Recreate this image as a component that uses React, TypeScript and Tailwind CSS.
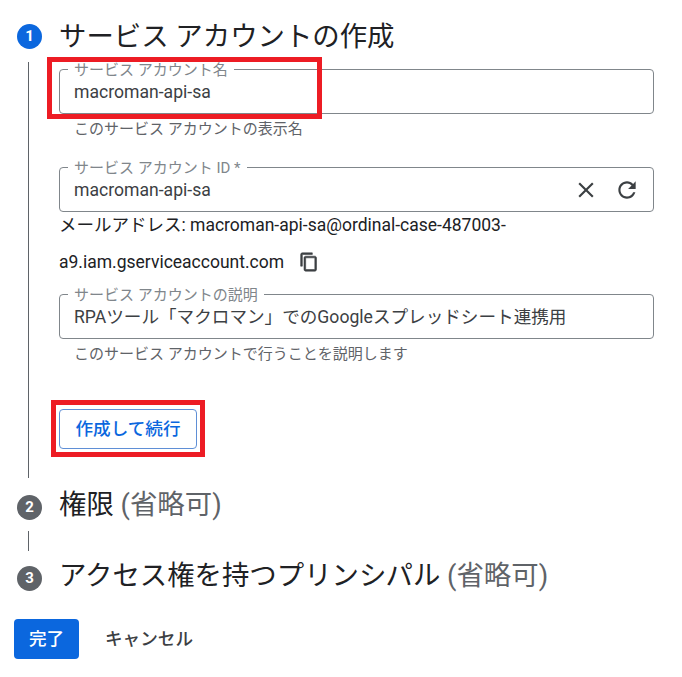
import React from 'react';

const font = "font-['Roboto','Noto_Sans_CJK_JP',sans-serif]";

const Icon: React.FC<{ d: string; className: string }> = ({ d, className }) => (
  <svg viewBox="0 0 24 24" fill="currentColor" className={className}>
    <path d={d} />
  </svg>
);

const closePath =
  'M19 6.41L17.59 5 12 10.59 6.41 5 5 6.41 10.59 12 5 17.59 6.41 19 12 13.41 17.59 19 19 17.59 13.41 12z';
const refreshPath =
  'M17.65 6.35C16.2 4.9 14.21 4 12 4c-4.42 0-7.99 3.58-7.99 8s3.57 8 7.99 8c3.73 0 6.84-2.55 7.73-6h-2.08c-.82 2.33-3.04 4-5.65 4-3.31 0-6-2.69-6-6s2.69-6 6-6c1.66 0 3.14.69 4.22 1.78L13 11h7V4l-2.35 2.35z';
const copyPath =
  'M16 1H4c-1.1 0-2 .9-2 2v14h2V3h12V1zm3 4H8c-1.1 0-2 .9-2 2v14c0 1.1.9 2 2 2h11c1.1 0 2-.9 2-2V7c0-1.1-.9-2-2-2zm0 16H8V7h11v14z';

const StepBadge: React.FC<{ n: number; active?: boolean }> = ({ n, active }) => (
  <div
    className={`flex h-[25px] w-[25px] shrink-0 items-center justify-center rounded-full text-[15px] font-bold text-white ${
      active ? 'bg-[#0b67de]' : 'bg-[#5f6368]'
    }`}
  >
    {n}
  </div>
);

const Field: React.FC<{ label: string; value: string; children?: React.ReactNode }> = ({ label, value, children }) => (
  <div className="relative flex h-[45px] items-center justify-between rounded-[4px] border border-[#80868b] pl-[14px] pr-[13px]">
    <span className="absolute -top-[8px] left-[8px] bg-white px-[6px] text-[15px] leading-[16px] text-[#80868b]">{label}</span>
    <span className="mt-[2px] text-[17.6px] text-[#3c4043]">{value}</span>
    {children}
  </div>
);

const Hint: React.FC<{ children: React.ReactNode }> = ({ children }) => (
  <p className="mt-[7px] pl-[15px] text-[15px] leading-[16px] text-[#5f6368]">{children}</p>
);

export default function App() {
  return (
    <div className={`${font} relative h-[677px] w-[682px] overflow-hidden bg-white pt-[20px] text-[#202124]`}>
      <div className="flex h-[32px] items-center pl-[17px]">
        <StepBadge n={1} active />
        <h2 className="ml-[17px] translate-y-[1px] text-[27.4px] leading-[32px]">サービス アカウントの作成</h2>
      </div>

      <div className="ml-[28px] mt-[10px] h-[416px] w-[626px] border-l border-[#5f6368] pl-[30px] pt-[7px]">
        <Field label="サービス アカウント名" value="macroman-api-sa" />
        <Hint>このサービス アカウントの表示名</Hint>

        <div className="mt-[30px]">
          <Field label="サービス アカウント ID *" value="macroman-api-sa">
            <div className="flex items-center gap-[15px]">
              <Icon d={closePath} className="h-[26px] w-[26px] text-[#3c4043]" />
              <Icon d={refreshPath} className="h-[26px] w-[26px] text-[#3c4043]" />
            </div>
          </Field>
        </div>

        <p className="mt-[-5px] text-[17.5px] leading-[37px] text-[#202124]">
          メールアドレス: macroman-api-sa@ordinal-case-487003-
          <br />
          a9.iam.gserviceaccount.com
          <Icon d={copyPath} className="ml-[15px] inline-block h-[20px] w-[20px] stroke-current stroke-[0.7] align-[-4px] text-[#3c4043]" />
        </p>

        <div className="mt-[13px]">
          <Field label="サービス アカウントの説明" value="RPAツール「マクロマン」でのGoogleスプレッドシート連携用" />
        </div>
        <Hint>このサービス アカウントで行うことを説明します</Hint>

        <button className="mt-[47px] h-[40px] w-[138px] rounded-[4px] border border-[#5f8fd6] text-[17.6px] font-medium text-[#0b67de]">
          作成して続行
        </button>
      </div>

      <div className="mt-[13px] flex h-[32px] items-center pl-[17px]">
        <StepBadge n={2} />
        <h2 className="ml-[17px] -translate-y-[2px] text-[27.4px] leading-[32px]">
          権限 <span className="text-[#5f6368]">(省略可)</span>
        </h2>
      </div>

      <div className="ml-[28px] mt-[8px] h-[20px] border-l border-[#5f6368]" />

      <div className="mt-[11px] flex h-[32px] items-center pl-[17px]">
        <StepBadge n={3} />
        <h2 className="ml-[17px] -translate-y-[2px] text-[27.4px] leading-[32px]">
          アクセス権を持つプリンシパル <span className="text-[#5f6368]">(省略可)</span>
        </h2>
      </div>

      <div className="mt-[25px] flex items-center pl-[14px]">
        <button className="h-[40px] w-[65px] rounded-[4px] bg-[#0b67de] text-[17.6px] font-medium text-white">完了</button>
        <button className="ml-[26px] text-[17.6px] font-medium text-[#3c4043]">キャンセル</button>
      </div>

      <div className="pointer-events-none absolute left-[47px] top-[57px] h-[62px] w-[275px] border-[5px] border-[#ed1c24]" />
      <div className="pointer-events-none absolute left-[51px] top-[400px] h-[57px] w-[154px] border-[5px] border-[#ed1c24]" />
    </div>
  );
}
